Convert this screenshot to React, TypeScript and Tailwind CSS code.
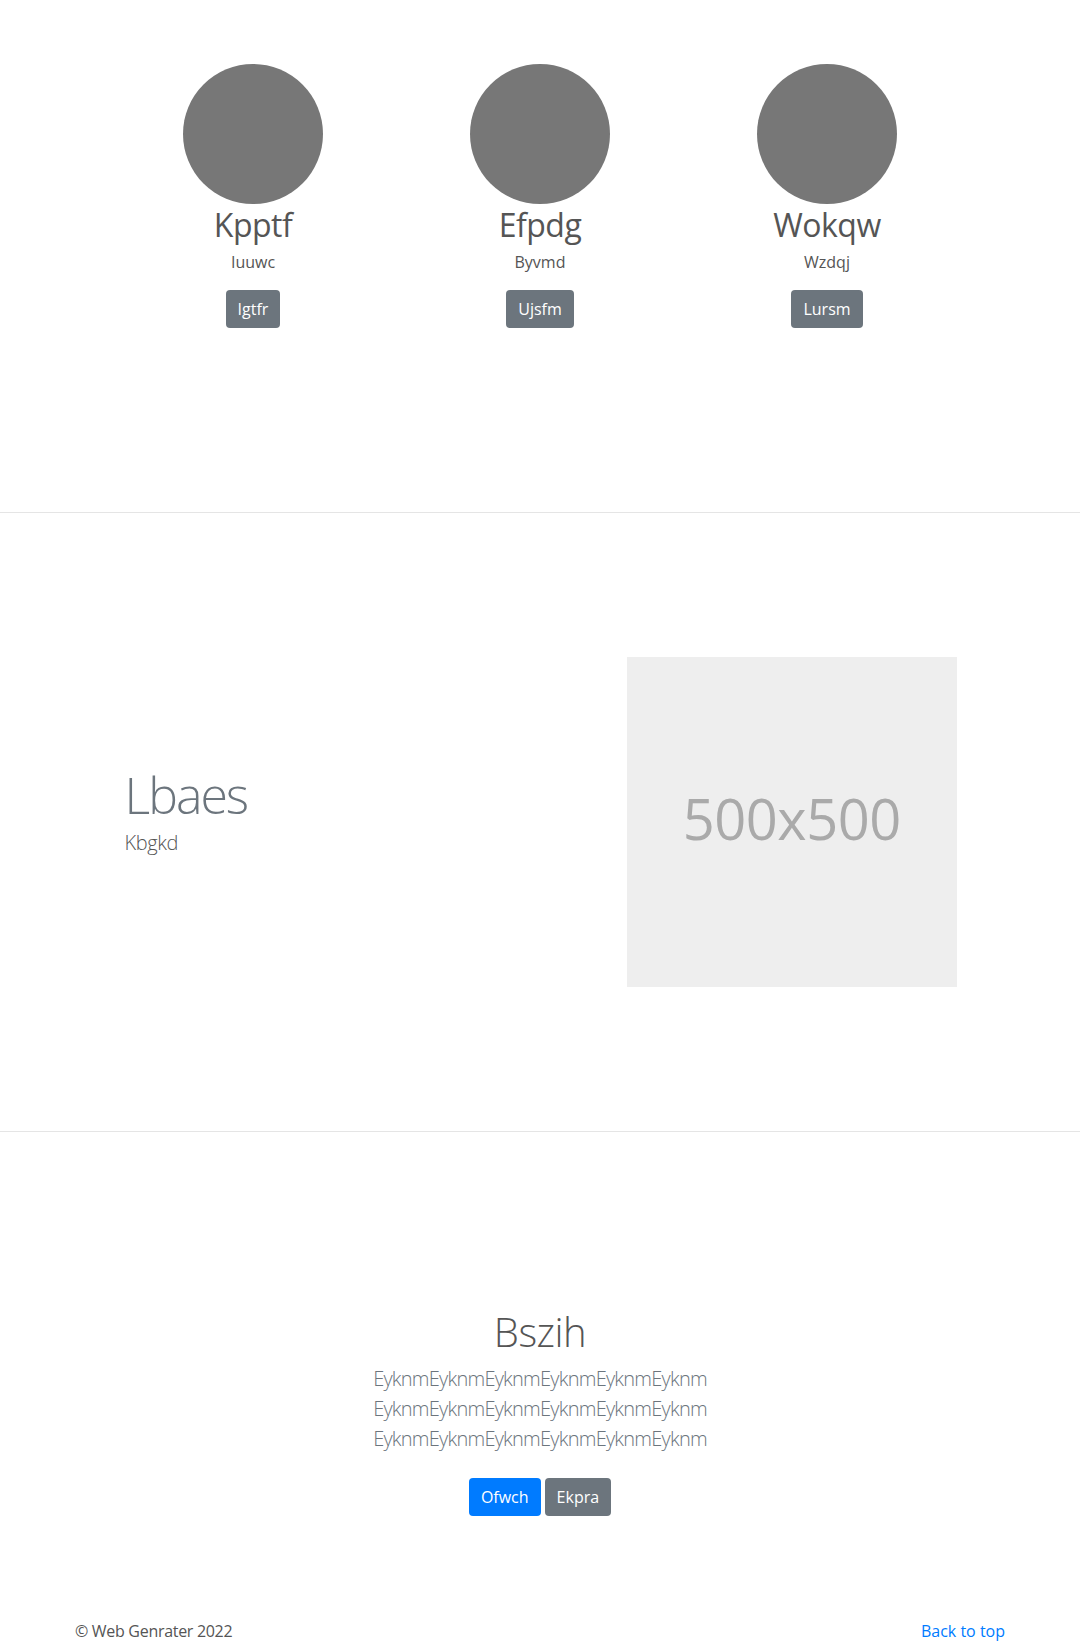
import React from "react";

const people = [
  { name: "Kpptf", sub: "Iuuwc", btn: "Igtfr" },
  { name: "Efpdg", sub: "Byvmd", btn: "Ujsfm" },
  { name: "Wokqw", sub: "Wzdqj", btn: "Lursm" },
];

export default function App() {
  return (
    <div
      className="min-h-[1644px] bg-white text-[#555]"
      style={{ fontFamily: '"Open Sans", "Noto Sans", sans-serif' }}
    >
      {/* Section 1 */}
      <section className="pt-[64px] pb-[184px]">
        <div className="mx-auto grid w-[861px] grid-cols-3">
          {people.map((p) => (
            <div key={p.name} className="flex flex-col items-center px-[15px] text-center">
              <div className="h-[140px] w-[140px] rounded-full bg-[#777]" />
              <h2 className="mt-[2px] mb-[6px] text-[32px] font-normal leading-[38px] tracking-[-0.5px] text-[#555]">
                {p.name}
              </h2>
              <p className="text-[16px] leading-[24px] text-[#555]">{p.sub}</p>
              <button className="mt-[16px] h-[38px] rounded-[4px] bg-[#6c757d] px-[12px] text-[16px] leading-[24px] text-white">
                {p.btn}
              </button>
            </div>
          ))}
        </div>
      </section>

      <div className="h-px w-full bg-[#e5e5e5]" />

      {/* Section 2 */}
      <section className="py-[144px]">
        <div className="mx-auto grid w-[861px] grid-cols-12 items-center">
          <div className="col-span-7 px-[15px]">
            <h2 className="mb-[8px] text-[50px] font-light leading-[50px] tracking-[-2px] text-[#6c757d]">
              Lbaes
            </h2>
            <p className="mb-[16px] text-[20px] font-light leading-[30px] tracking-[-0.4px] text-[#555]">
              Kbgkd
            </p>
          </div>
          <div className="col-span-5 px-[15px]">
            <div className="flex h-[330px] w-[330px] items-center justify-center bg-[#eee] pb-[8px]">
              <span className="text-[56px] leading-none tracking-[-0.5px] text-[#aaa]">500x500</span>
            </div>
          </div>
        </div>
      </section>

      <div className="h-px w-full bg-[#e5e5e5]" />

      {/* Section 3 */}
      <section className="pt-[176px] text-center">
        <h1 className="mb-[8px] text-[40px] font-light leading-[48px] tracking-[-0.5px] text-[#555]">
          Bszih
        </h1>
        <p className="mx-auto mb-[24px] max-w-[360px] text-[20px] font-light leading-[30px] tracking-[-0.75px] text-[#6c757d]">
          EyknmEyknmEyknmEyknmEyknmEyknm EyknmEyknmEyknmEyknmEyknmEyknm EyknmEyknmEyknmEyknmEyknmEyknm
        </p>
        <div className="flex justify-center gap-[4px]">
          <button className="h-[38px] rounded-[4px] bg-[#007bff] px-[12px] text-[16px] leading-[24px] text-white">
            Ofwch
          </button>
          <button className="h-[38px] rounded-[4px] bg-[#6c757d] px-[12px] text-[16px] leading-[24px] text-white">
            Ekpra
          </button>
        </div>
      </section>

      {/* Footer */}
      <footer className="pt-[103px] pb-[48px]">
        <div className="mx-auto flex w-[930px] items-start justify-between">
          <p className="text-[16px] leading-[24px] tracking-[-0.3px] text-[#555]">© Web Genrater 2022</p>
          <a href="#" className="text-[16px] leading-[24px] text-[#007bff]">
            Back to top
          </a>
        </div>
      </footer>
    </div>
  );
}
